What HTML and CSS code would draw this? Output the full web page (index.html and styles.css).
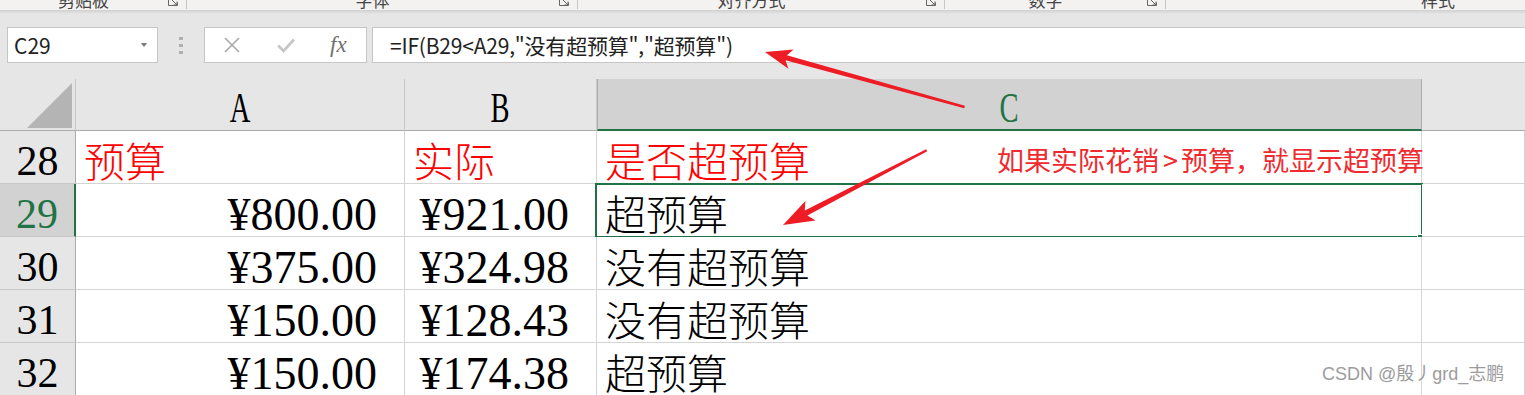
FILE: index.html
```html
<!DOCTYPE html>
<html lang="zh-CN">
<head>
<meta charset="utf-8">
<title>Excel IF</title>
<link rel="stylesheet" href="styles.css">
</head>
<body>
<div class="app">
  <div class="ribbon">
    <div class="rgroup g1"><span class="rlabel">剪贴板</span><svg class="launch" width="12" height="12" viewBox="0 0 12 12"><path d="M1.5 1.5V10.5H10.5V7.5" fill="none" stroke="#666" stroke-width="1"/><path d="M4 4L10 10M6.5 10H10V6.5" fill="none" stroke="#666" stroke-width="1"/></svg></div>
    <div class="rgroup g2"><span class="rlabel">字体</span><svg class="launch" width="12" height="12" viewBox="0 0 12 12"><path d="M1.5 1.5V10.5H10.5V7.5" fill="none" stroke="#666" stroke-width="1"/><path d="M4 4L10 10M6.5 10H10V6.5" fill="none" stroke="#666" stroke-width="1"/></svg></div>
    <div class="rgroup g3"><span class="rlabel">对齐方式</span><svg class="launch" width="12" height="12" viewBox="0 0 12 12"><path d="M1.5 1.5V10.5H10.5V7.5" fill="none" stroke="#666" stroke-width="1"/><path d="M4 4L10 10M6.5 10H10V6.5" fill="none" stroke="#666" stroke-width="1"/></svg></div>
    <div class="rgroup g4"><span class="rlabel">数字</span><svg class="launch" width="12" height="12" viewBox="0 0 12 12"><path d="M1.5 1.5V10.5H10.5V7.5" fill="none" stroke="#666" stroke-width="1"/><path d="M4 4L10 10M6.5 10H10V6.5" fill="none" stroke="#666" stroke-width="1"/></svg></div>
    <div class="rgroup g5"><span class="rlabel">样式</span></div>
  </div>
  <div class="rshadow"></div>

  <div class="fbar">
    <div class="namebox"><span class="ref">C29</span><span class="dd"></span></div>
    <div class="grip"><i></i><i></i><i></i></div>
    <div class="fxbox">
      <svg class="ico-x" width="16" height="16" viewBox="0 0 16 16"><path d="M1 1L15 15M15 1L1 15" stroke="#a9a9a9" stroke-width="1.6" fill="none"/></svg>
      <svg class="ico-ok" width="18" height="15" viewBox="0 0 18 15"><path d="M1.2 7.5L6.5 13L17 1.5" stroke="#c6c6c6" stroke-width="2.6" fill="none"/></svg>
      <span class="fx">fx</span>
    </div>
    <div class="finput">=IF(B29&lt;A29,"没有超预算","超预算")</div>
  </div>

  <div class="sheet">
    <div class="corner"><div class="tri"></div></div>
    <div class="hd"><span class="letter">A</span></div>
    <div class="hd"><span class="letter">B</span></div>
    <div class="hd sel"><span class="letter">C</span></div>
    <div class="hd last"></div>

    <div class="rh">28</div>
    <div class="c cj red">预算</div>
    <div class="c cj red">实际</div>
    <div class="c cj red">是否超预算</div>
    <div class="c"></div>

    <div class="rh sel">29</div>
    <div class="c num">¥800.00</div>
    <div class="c num">¥921.00</div>
    <div class="c cj">超预算<div class="selbox"><div class="handle"></div></div></div>
    <div class="c"></div>

    <div class="rh">30</div>
    <div class="c num">¥375.00</div>
    <div class="c num">¥324.98</div>
    <div class="c cj">没有超预算</div>
    <div class="c"></div>

    <div class="rh">31</div>
    <div class="c num">¥150.00</div>
    <div class="c num">¥128.43</div>
    <div class="c cj">没有超预算</div>
    <div class="c"></div>

    <div class="rh">32</div>
    <div class="c num">¥150.00</div>
    <div class="c num">¥174.38</div>
    <div class="c cj">超预算</div>
    <div class="c"></div>
  </div>

  <svg class="arrows" width="1525" height="395" viewBox="0 0 1525 395">
    <g transform="translate(765 52) rotate(195.4)">
      <polygon points="-207,-1.2 -22,-2.6 -27,-10 0,0 -27,10 -22,2.6 -207,1.2" fill="#ee1c25"/>
    </g>
    <g transform="translate(783 225) rotate(152.5)">
      <polygon points="-162,-1.2 -26,-2.8 -31,-11 0,0 -31,11 -26,2.8 -162,1.2" fill="#ee1c25"/>
    </g>
  </svg>
  <div class="note">如果实际花销<span class="gt">&gt;</span>预算，就显示超预算</div>
  <div class="wm">CSDN @殷丿grd_志鹏</div>
</div>
</body>
</html>
```

FILE: styles.css
```css
html, body {
  margin: 0;
  padding: 0;
}
body {
  width: 1525px;
  height: 395px;
  overflow: hidden;
  background: #e6e6e6;
  font-family: "Noto Sans CJK SC", "Noto Sans", sans-serif;
}
.app {
  position: relative;
  width: 1525px;
  height: 395px;
  overflow: hidden;
}

/* ribbon strip (cut off) */
.ribbon {
  display: flex;
  height: 10px;
  background: #f3f2f1;
  overflow: hidden;
}
.rgroup {
  display: flex;
  align-items: flex-start;
  height: 9px;
  box-sizing: border-box;
  border-right: 1px solid #c8c6c4;
}
.g1 { width: 187px; }
.g2 { width: 391px; }
.g3 { width: 367px; }
.g4 { width: 221px; }
.g5 { flex: 1; border-right: none; }
.rlabel {
  flex: 1;
  text-align: center;
  font-size: 17px;
  line-height: 17px;
  margin-top: -9px;
  color: #444;
  white-space: nowrap;
}
.g5 .rlabel {
  text-align: left;
  padding-left: 255px;
}
.launch {
  flex: none;
  margin-top: -5px;
  margin-right: 7px;
}
.rshadow {
  height: 4px;
  background: linear-gradient(#d0d0d0, #e6e6e6);
}

/* formula bar */
.fbar {
  display: flex;
  align-items: flex-start;
  height: 65px;
  padding-top: 13px;
  box-sizing: border-box;
}
.namebox {
  margin-left: 7px;
  width: 151px;
  height: 36px;
  box-sizing: border-box;
  border: 1px solid #c6c6c6;
  background: #fff;
  display: flex;
  align-items: center;
  justify-content: space-between;
  padding: 0 10px 0 6px;
}
.ref {
  font-size: 21px;
  line-height: 34px;
  color: #222;
}
.dd {
  width: 0;
  height: 0;
  border-left: 3.5px solid transparent;
  border-right: 3.5px solid transparent;
  border-top: 4px solid #777;
}
.grip {
  width: 46px;
  height: 36px;
  display: flex;
  flex-direction: column;
  align-items: center;
  justify-content: center;
  gap: 4px;
}
.grip i {
  display: block;
  width: 4px;
  height: 3px;
  background: #b0b0b0;
}
.fxbox {
  width: 163px;
  height: 36px;
  box-sizing: border-box;
  border: 1px solid #c6c6c6;
  background: #fff;
  display: flex;
  align-items: center;
  padding-left: 19px;
}
.ico-ok { margin-left: 37px; }
.fx {
  margin-left: 35px;
  font-family: "Liberation Serif", serif;
  font-style: italic;
  font-size: 23px;
  line-height: 30px;
  color: #6f6f6f;
}
.finput {
  flex: 1;
  margin-left: 5px;
  height: 36px;
  box-sizing: border-box;
  border: 1px solid #c6c6c6;
  border-right: none;
  background: #fff;
  padding-left: 17px;
  font-size: 21px;
  line-height: 34px;
  color: #222;
  white-space: nowrap;
  letter-spacing: -0.2px;
}

/* sheet grid */
.sheet {
  display: grid;
  grid-template-columns: 76px 329px 192px 825px 103px;
  grid-template-rows: 52px repeat(5, 53px);
}
.corner {
  background: #e6e6e6;
  border-right: 1px solid #c9c9c9;
  border-bottom: 1px solid #ababab;
  box-sizing: border-box;
}
.tri {
  width: 45px;
  height: 45px;
  margin: 4px 0 0 27px;
  background: #b4b4b4;
  clip-path: polygon(100% 0, 100% 100%, 0 100%);
}
.hd {
  background: #e6e6e6;
  border-right: 1px solid #c9c9c9;
  border-bottom: 1px solid #ababab;
  box-sizing: border-box;
  display: flex;
  justify-content: center;
  align-items: flex-end;
  padding-bottom: 1px;
  font-family: "Liberation Serif", serif;
  font-size: 42px;
  line-height: 42px;
  color: #000;
}
.hd.sel {
  background: #d2d2d2;
  border-left: 1px solid #ababab;
  border-right: 1px solid #ababab;
  border-bottom: 2px solid #217346;
  padding-bottom: 0;
  color: #217346;
}
.hd.last { border-right: none; }
.letter {
  display: inline-block;
  transform: scaleX(0.68);
}
.rh {
  background: #e6e6e6;
  border-right: 1px solid #ababab;
  border-bottom: 1px solid #c8c8c8;
  box-sizing: border-box;
  display: flex;
  justify-content: center;
  align-items: flex-end;
  padding-bottom: 1px;
  font-family: "Liberation Serif", serif;
  font-size: 42px;
  line-height: 42px;
  color: #000;
}
.rh.sel {
  background: #d2d2d2;
  border-right: 2px solid #217346;
  color: #217346;
}
.c {
  position: relative;
  background: #fff;
  border-right: 1px solid #d4d4d4;
  border-bottom: 1px solid #d4d4d4;
  box-sizing: border-box;
  display: flex;
  align-items: flex-end;
  white-space: nowrap;
}
.cj {
  font-family: "Noto Sans CJK SC", sans-serif;
  font-weight: 300;
  font-size: 41px;
  line-height: 41px;
  padding: 0 0 3px 8px;
  color: #000;
}
.red { color: #ff0000; }
.num {
  justify-content: flex-end;
  padding-right: 27px;
  font-family: "Liberation Serif", serif;
  font-size: 46px;
  line-height: 43px;
  color: #000;
}
.selbox {
  position: absolute;
  left: -2px;
  top: -1px;
  right: -2px;
  bottom: -2px;
  border: 2px solid #217346;
}
.handle {
  position: absolute;
  right: -3px;
  bottom: -5px;
  width: 5px;
  height: 5px;
  background: #217346;
  border: 1px solid #fff;
}

/* annotations */
.arrows {
  position: absolute;
  left: 0;
  top: 0;
  pointer-events: none;
}
.note {
  position: absolute;
  left: 997px;
  top: 146px;
  font-family: "Noto Sans CJK SC", sans-serif;
  font-size: 27px;
  line-height: 27px;
  color: #ef2b30;
  white-space: nowrap;
}
.gt {
  margin: 0 3px 0 4px;
}
.wm {
  position: absolute;
  left: 1322px;
  top: 362px;
  font-family: "Liberation Sans", "Noto Sans CJK SC", sans-serif;
  font-size: 18px;
  line-height: 24px;
  color: #9c9c9c;
  text-shadow: 0 0 2px #fff, 0 0 1px #fff;
  white-space: nowrap;
}
```
